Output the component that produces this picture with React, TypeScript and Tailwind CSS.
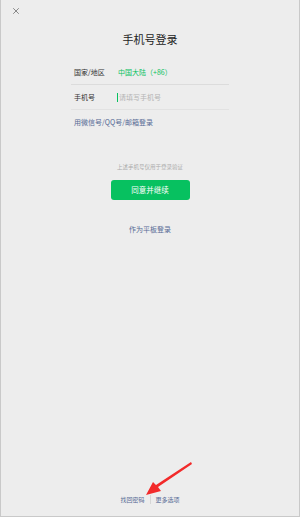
import { X } from "lucide-react";

const font = { fontFamily: '"Noto Sans CJK SC", "Noto Sans", sans-serif' };

export default function App() {
  return (
    <div
      className="relative flex h-[517px] w-[300px] flex-col border-x border-b border-[#c9c9c9] bg-[#ededed]"
      style={font}
    >
      <div className="flex h-[22px] items-center pl-[10px]">
        <X size={10} strokeWidth={1.6} className="text-[#555]" />
      </div>

      <h1 className="mt-[9px] text-center text-[11px] leading-[16px] text-[#222]">手机号登录</h1>

      <div className="mx-[70px] mt-[14px]">
        <div className="flex h-[24px] items-center border-b border-[#dcdcdc] pl-[3px] text-[7px]">
          <span className="w-[44px] text-[#333]">国家/地区</span>
          <span className="text-[#07c160]">中国大陆（+86）</span>
        </div>
        <div className="flex h-[25px] items-center border-b border-[#e2e2e2] pl-[3px] text-[7px]">
          <span className="w-[43px] text-[#333]">手机号</span>
          <span className="mr-[1px] h-[9px] w-px bg-[#07c160]" />
          <span className="text-[#b4b4b4]">请填写手机号</span>
        </div>
        <div className="mt-[7px] pl-[3px] text-[7px] leading-[10px] text-[#576b95]">用微信号/QQ号/邮箱登录</div>
      </div>

      <p className="mt-[36px] text-center text-[5.5px] leading-[8px] text-[#ababab]">上述手机号仅用于登录验证</p>

      <button className="mx-auto mt-[9px] flex h-[20px] w-[79px] items-center justify-center rounded-[3px] bg-[#07c160] text-[7.5px] text-white">
        同意并继续
      </button>

      <p className="mt-[24px] text-center text-[7px] leading-[10px] text-[#576b95]">作为平板登录</p>

      <div className="mt-auto mb-[12px] flex items-center justify-center text-[6px] leading-[8px] text-[#576b95]">
        <span>找回密码</span>
        <span className="mx-[5px] h-[9px] w-px bg-[#d6d6d6]" />
        <span>更多选项</span>
      </div>

      <svg className="absolute left-[140px] top-[458px]" width="56" height="42" viewBox="0 0 56 42">
        <polygon points="50,4 51,6 17,29 20,33 5,37 12,24 15,27" fill="#f22a2a" />
      </svg>
    </div>
  );
}
